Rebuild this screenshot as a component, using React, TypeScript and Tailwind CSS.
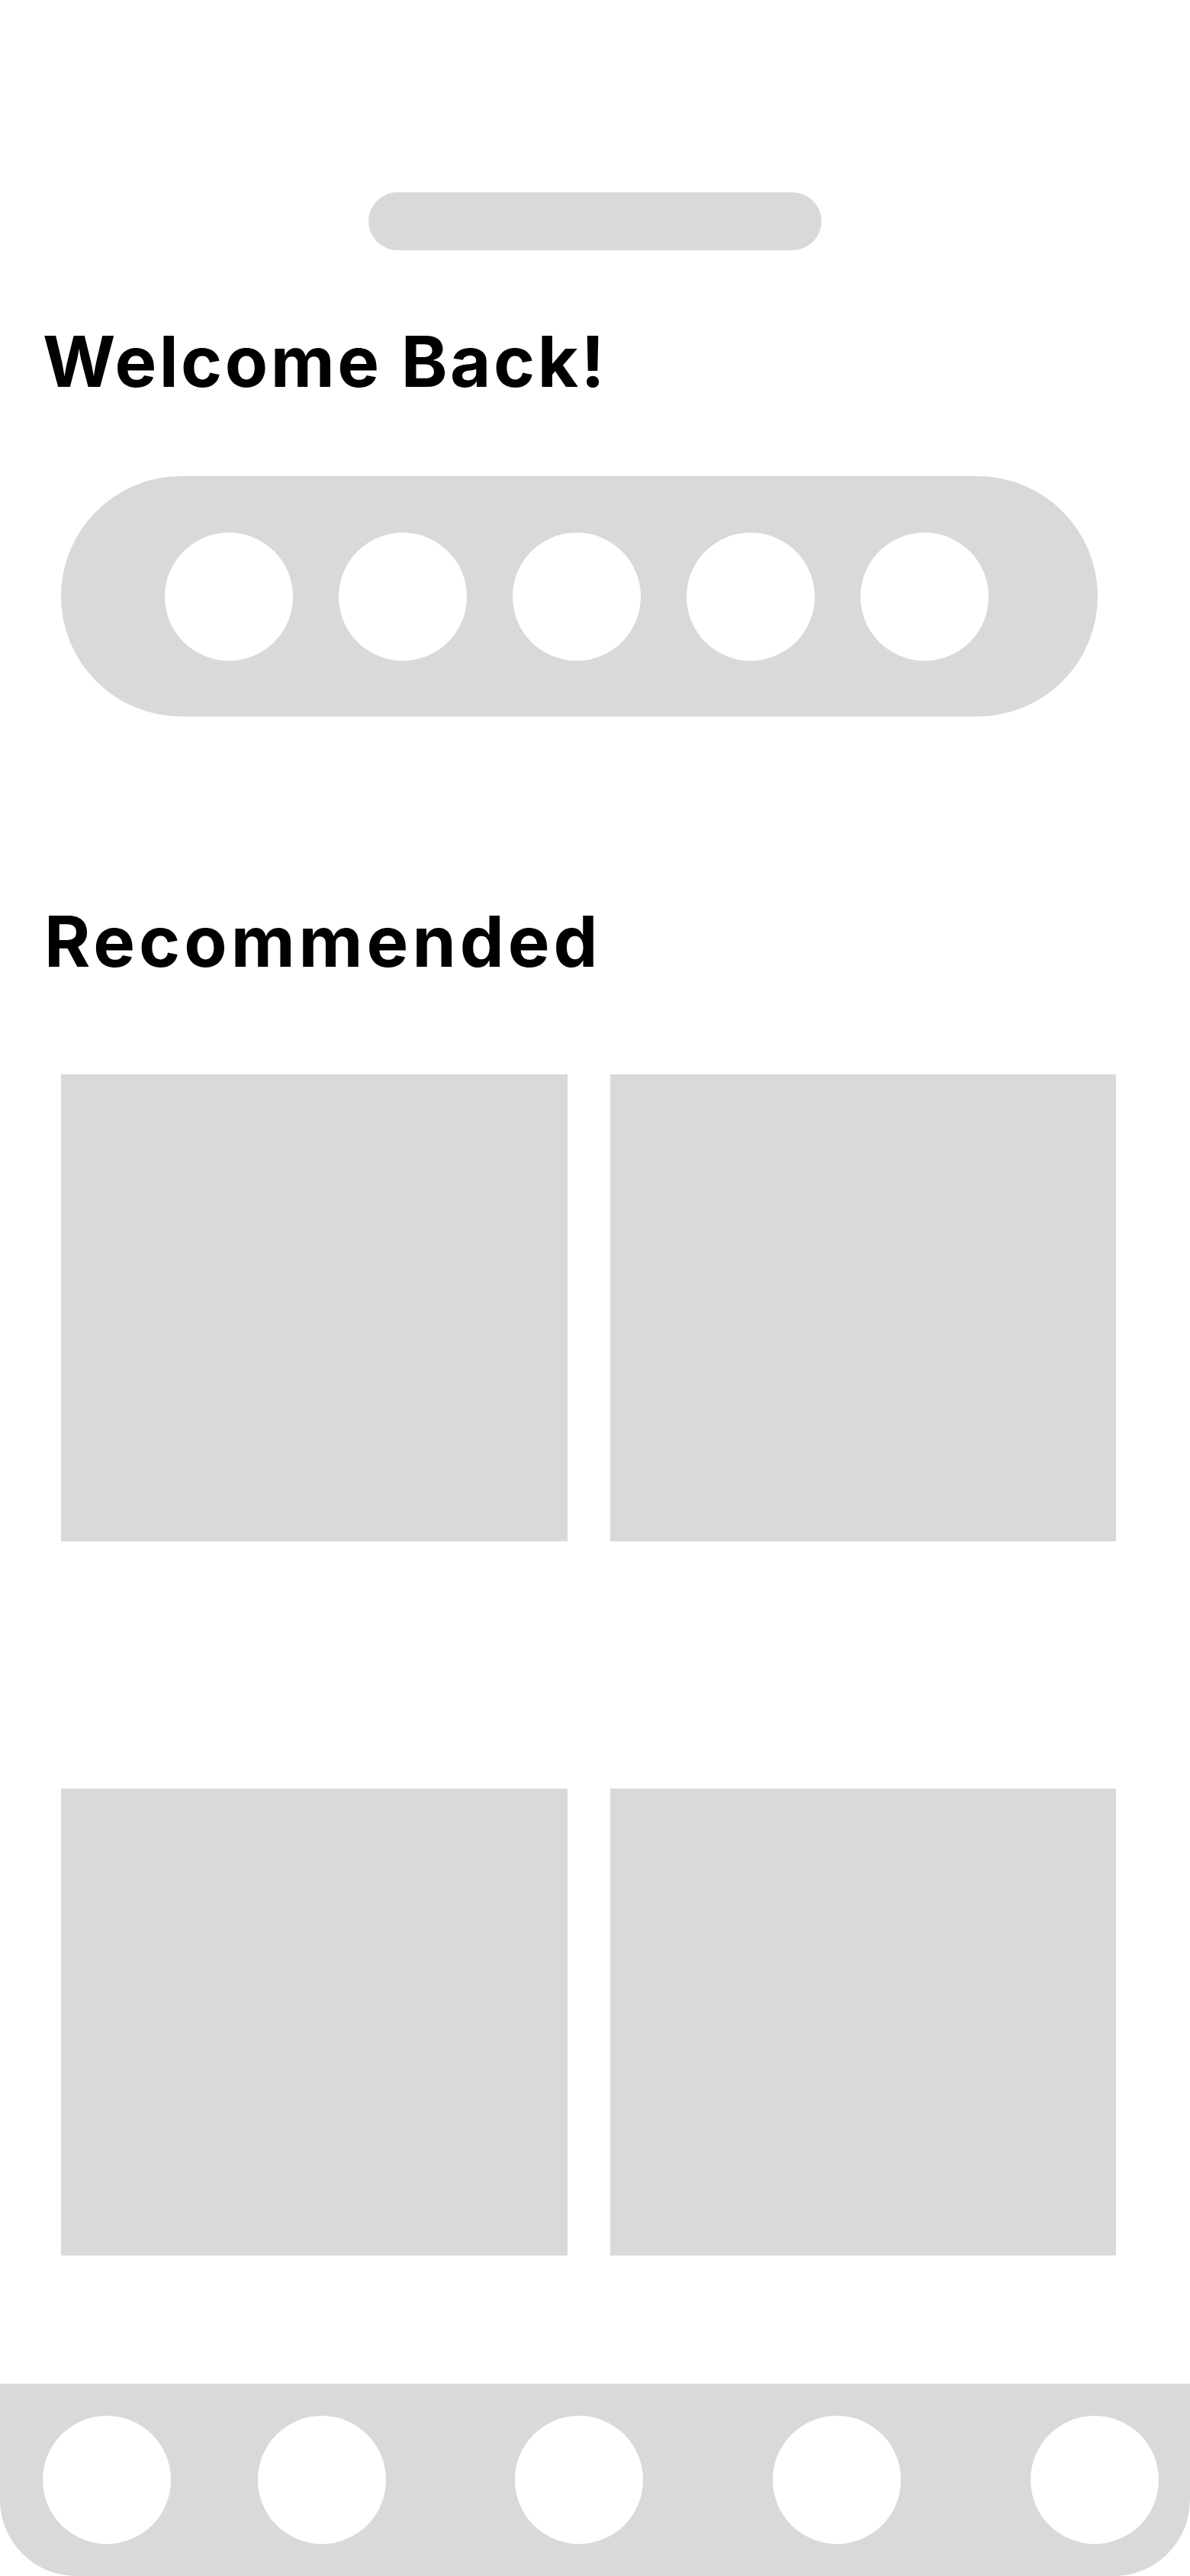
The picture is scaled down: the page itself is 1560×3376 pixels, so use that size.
const quick = [0, 1, 2, 3, 4];

function Dot({ className = "" }: { className?: string }) {
  return <div className={`h-[168px] w-[168px] shrink-0 rounded-full bg-white ${className}`} />;
}

export default function App() {
  return (
    <div className="flex h-[3376px] w-full flex-col overflow-hidden bg-white font-['Inter',sans-serif] text-black">
      {/* search bar placeholder */}
      <div className="mx-auto mt-[252px] h-[76px] w-[594px] shrink-0 rounded-full bg-[#d9d9d9]" />

      <h1 className="mt-[100px] pl-[56px] text-[92px] font-bold leading-[92px] tracking-[3.5px]">
        Welcome Back!
      </h1>

      {/* quick actions */}
      <div className="ml-[80px] mt-[104px] flex h-[315px] w-[1359px] shrink-0 items-center gap-[60px] rounded-full bg-[#d9d9d9] pl-[136px]">
        {quick.map((i) => (
          <Dot key={i} />
        ))}
      </div>

      <h2 className="mt-[249px] pl-[58px] text-[92px] font-bold leading-[92px] tracking-[5px]">
        Recommended
      </h2>

      <div className="ml-[80px] mt-[128px] grid shrink-0 grid-cols-[664px_663px] grid-rows-[612px_612px] gap-x-[56px] gap-y-[324px]">
        <div className="bg-[#d9d9d9]" />
        <div className="bg-[#d9d9d9]" />
        <div className="bg-[#d9d9d9]" />
        <div className="bg-[#d9d9d9]" />
      </div>

      {/* bottom nav */}
      <nav className="mt-[168px] flex h-[252px] shrink-0 items-center rounded-b-[100px] bg-[#d9d9d9] pl-[56px]">
        <Dot />
        <Dot className="ml-[114px]" />
        <Dot className="ml-[169px]" />
        <Dot className="ml-[170px]" />
        <Dot className="ml-[170px]" />
      </nav>
    </div>
  );
}
